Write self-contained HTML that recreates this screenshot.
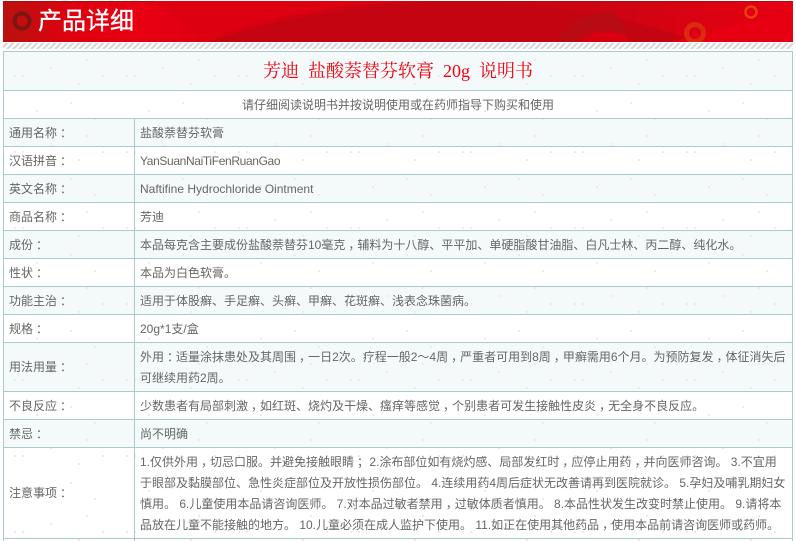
<!DOCTYPE html>
<html><head><meta charset="utf-8">
<style>
html,body{margin:0;padding:0;background:#fff}
#p{position:relative;width:796px;height:541px;overflow:hidden;background:#fff;font-family:"Liberation Sans","Noto Sans CJK SC",sans-serif;font-size:12px;color:#666}
.a{position:absolute}
.bg{position:absolute;left:4px;width:788px}
.t{background:#f4fafa}
.h{position:absolute;left:3px;width:790px;height:1px;background:#a9cbcd}
.v{position:absolute;width:1px;background:#a9cbcd}
.l,.c{position:absolute;white-space:nowrap;line-height:21px}
.l{left:9px}
.c{left:140px}
i{font-style:normal;position:relative;left:3px}
</style></head><body><div id="p">
<svg class="a" style="left:3px;top:1px" width="790" height="41" viewBox="0 0 790 41">
<defs><linearGradient id="g" x1="0" x2="1" y1="0" y2="0">
<stop offset="0" stop-color="#b8120f"/><stop offset=".09" stop-color="#e00010"/><stop offset=".17" stop-color="#e80012"/><stop offset=".3" stop-color="#d80010"/><stop offset=".5" stop-color="#c40412"/><stop offset=".75" stop-color="#cc0412"/><stop offset="1" stop-color="#e60012"/></linearGradient></defs>
<rect width="790" height="41" fill="url(#g)"/>
<rect width="790" height="1" fill="#a80d10"/>
<path d="M150 0L205 41H127L195 41C260 15 340 2 430 0Z" fill="#dc0010"/>
<path d="M205 41C280 12 390 2 470 1C560 2 640 20 690 40L690 41Z" fill="#c50412"/>
<path d="M555 41C565 18 590 10 610 11C620 24 640 36 600 41Z" fill="#b80b14"/>
<path d="M575 41C585 30 605 27 622 34L626 41Z" fill="#d80010"/>
<path d="M670 41C700 30 750 18 790 14V41Z" fill="#e60012"/>
<circle cx="19" cy="20" r="7.5" fill="none" stroke="#7e1512" stroke-width="4"/>
<circle cx="692" cy="32" r="8.5" fill="none" stroke="#dc2a10" stroke-width="5"/>
<circle cx="748" cy="11" r="5.5" fill="none" stroke="#e8400f" stroke-width="2.6"/>
</svg>
<div class="a" style="left:38px;top:4px;font-size:24px;line-height:36px;color:#fff;white-space:nowrap;-webkit-text-stroke:.3px #fff">产品详细</div>
<div class="a" style="left:3px;top:43px;width:790px;height:6px;background:repeating-linear-gradient(135deg,#fff 0 2.12px,#d6d6d6 2.12px 4.24px)"></div>

<div class="bg t" style="top:52px;height:38px"></div>
<div class="bg t" style="top:119px;height:27px"></div>
<div class="bg t" style="top:175px;height:27px"></div>
<div class="bg t" style="top:231px;height:27px"></div>
<div class="bg t" style="top:287px;height:27px"></div>
<div class="bg t" style="top:343px;height:48px"></div>
<div class="bg t" style="top:420px;height:27px"></div>

<svg class="a" style="left:0;top:50px" width="796" height="491">
<defs><pattern id="d" width="112" height="76" patternUnits="userSpaceOnUse">
<g fill="#fbe3ea"><rect x="14" y="25" width="2" height="2"/><rect x="22" y="25" width="2" height="2"/><rect x="50" y="17" width="2" height="2"/><rect x="78" y="33" width="2" height="2"/><rect x="86" y="9" width="2" height="2"/><rect x="102" y="25" width="2" height="2"/><rect x="36" y="60" width="2" height="2"/><rect x="70" y="52" width="2" height="2"/><rect x="94" y="68" width="2" height="2"/></g>
</pattern></defs>
<rect width="796" height="491" fill="url(#d)"/></svg>

<div class="h" style="top:51px"></div>
<div class="h" style="top:90px"></div>
<div class="h" style="top:118px"></div>
<div class="h" style="top:146px"></div>
<div class="h" style="top:174px"></div>
<div class="h" style="top:202px"></div>
<div class="h" style="top:230px"></div>
<div class="h" style="top:258px"></div>
<div class="h" style="top:286px"></div>
<div class="h" style="top:314px"></div>
<div class="h" style="top:342px"></div>
<div class="h" style="top:391px"></div>
<div class="h" style="top:419px"></div>
<div class="h" style="top:447px"></div>
<div class="h" style="top:538px"></div>
<div class="v" style="left:3px;top:51px;height:490px"></div>
<div class="v" style="left:792px;top:51px;height:490px"></div>
<div class="v" style="left:134px;top:118px;height:423px"></div>

<div class="a" style="left:4px;width:788px;top:60px;text-align:center;font-size:18px;word-spacing:4.5px;line-height:22px;color:#f4000f;white-space:pre;font-family:'Liberation Serif','Noto Serif CJK SC',serif">芳迪 盐酸萘替芬软膏 20g 说明书</div>
<div class="a" style="left:4px;width:788px;top:95px;text-align:center;line-height:21px;white-space:nowrap">请仔细阅读说明书并按说明使用或在药师指导下购买和使用</div>

<div class="l" style="top:123px">通用名称<i>：</i></div><div class="c" style="top:123px">盐酸萘替芬软膏</div>
<div class="l" style="top:151px">汉语拼音<i>：</i></div><div class="c" style="top:151px;letter-spacing:-.36px">YanSuanNaiTiFenRuanGao</div>
<div class="l" style="top:179px">英文名称<i>：</i></div><div class="c" style="top:179px">Naftifine Hydrochloride Ointment</div>
<div class="l" style="top:207px">商品名称<i>：</i></div><div class="c" style="top:207px">芳迪</div>
<div class="l" style="top:235px">成份<i>：</i></div><div class="c" style="top:235px">本品每克含主要成份盐酸萘替芬10毫克<i>，</i>辅料为十八醇、平平加、单硬脂酸甘油脂、白凡士林、丙二醇、纯化水。</div>
<div class="l" style="top:263px">性状<i>：</i></div><div class="c" style="top:263px">本品为白色软膏。</div>
<div class="l" style="top:291px">功能主治<i>：</i></div><div class="c" style="top:291px">适用于体股癣、手足癣、头癣、甲癣、花斑癣、浅表念珠菌病。</div>
<div class="l" style="top:319px">规格<i>：</i></div><div class="c" style="top:319px">20g*1支/盒</div>
<div class="l" style="top:357px">用法用量<i>：</i></div><div class="c" style="top:347px">外用<i>：</i>适量涂抹患处及其周围<i>，</i>一日2次。疗程一般2～4周<i>，</i>严重者可用到8周<i>，</i>甲癣需用6个月。为预防复发<i>，</i>体征消失后<br>可继续用药2周。</div>
<div class="l" style="top:396px">不良反应<i>：</i></div><div class="c" style="top:396px">少数患者有局部刺激<i>，</i>如红斑、烧灼及干燥、瘙痒等感觉<i>，</i>个别患者可发生接触性皮炎<i>，</i>无全身不良反应。</div>
<div class="l" style="top:424px">禁忌<i>：</i></div><div class="c" style="top:424px">尚不明确</div>
<div class="l" style="top:483px">注意事项<i>：</i></div><div class="c" style="top:452px;white-space:pre">1.仅供外用<i>，</i>切忌口服。并避免接触眼睛<i>；</i> 2.涂布部位如有烧灼感、局部发红时<i>，</i>应停止用药<i>，</i>并向医师咨询。 3.不宜用
于眼部及黏膜部位、急性炎症部位及开放性损伤部位。 4.连续用药4周后症状无改善请再到医院就诊。 5.孕妇及哺乳期妇女
慎用。 6.儿童使用本品请咨询医师。 7.对本品过敏者禁用<i>，</i>过敏体质者慎用。 8.本品性状发生改变时禁止使用。 9.请将本
品放在儿童不能接触的地方。 10.儿童必须在成人监护下使用。 11.如正在使用其他药品<i>，</i>使用本品前请咨询医师或药师。</div>
</div></body></html>
